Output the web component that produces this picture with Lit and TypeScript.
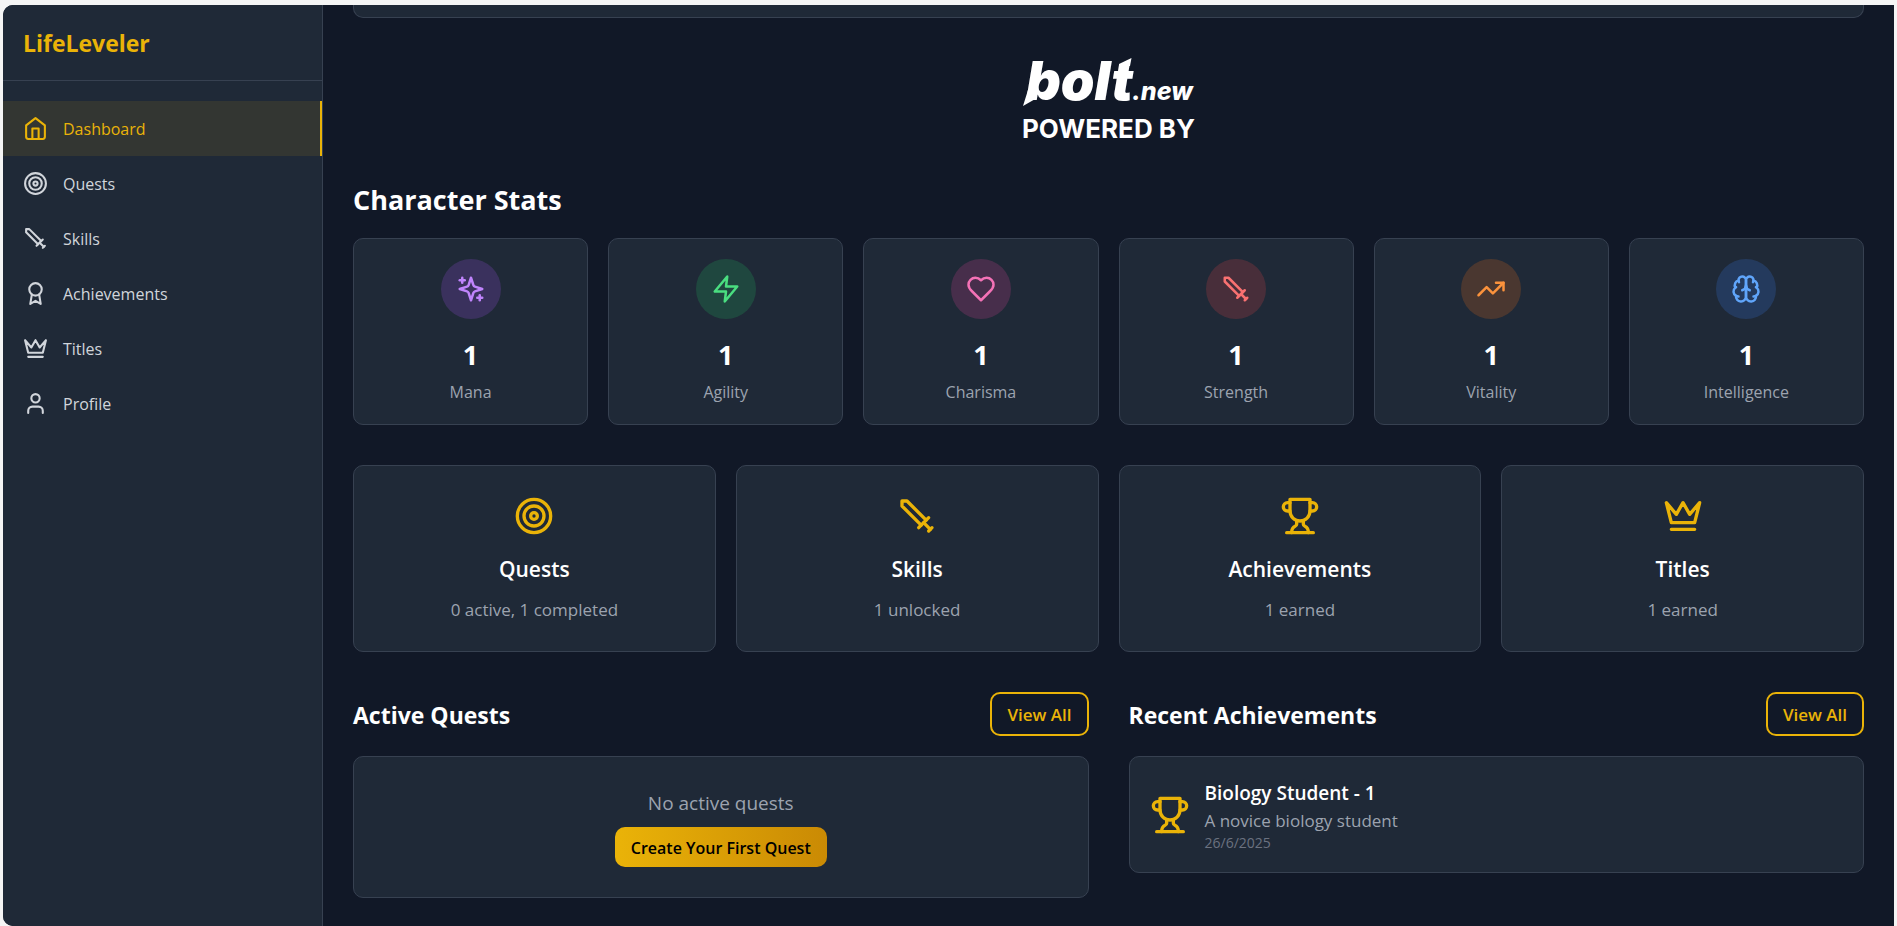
import { LitElement, html, svg, css } from 'lit';
import { customElement, property } from 'lit/decorators.js';
import { classMap } from 'lit/directives/class-map.js';

const ICONS: Record<string, unknown> = {
  home: svg`<path d="m3 9 9-7 9 7v11a2 2 0 0 1-2 2H5a2 2 0 0 1-2-2z"/><polyline points="9 22 9 12 15 12 15 22"/>`,
  target: svg`<circle cx="12" cy="12" r="10"/><circle cx="12" cy="12" r="6"/><circle cx="12" cy="12" r="2"/>`,
  sword: svg`<polyline points="14.5 17.5 3 6 3 3 6 3 17.5 14.5"/><line x1="13" x2="19" y1="19" y2="13"/><line x1="16" x2="20" y1="16" y2="20"/><line x1="19" x2="21" y1="21" y2="19"/>`,
  award: svg`<circle cx="12" cy="8" r="6"/><path d="M15.477 12.89 17 22l-5-3-5 3 1.523-9.11"/>`,
  crown: svg`<path d="m2 4 3 12h14l3-12-6 7-4-7-4 7-6-7zm3 16h14"/>`,
  user: svg`<path d="M19 21v-2a4 4 0 0 0-4-4H9a4 4 0 0 0-4 4v2"/><circle cx="12" cy="7" r="4"/>`,
  sparkles: svg`<path d="m12 3-1.912 5.813a2 2 0 0 1-1.275 1.275L3 12l5.813 1.912a2 2 0 0 1 1.275 1.275L12 21l1.912-5.813a2 2 0 0 1 1.275-1.275L21 12l-5.813-1.912a2 2 0 0 1-1.275-1.275L12 3Z"/><path d="M5 3v4"/><path d="M19 17v4"/><path d="M3 5h4"/><path d="M17 19h4"/>`,
  zap: svg`<polygon points="13 2 3 14 12 14 11 22 21 10 12 10 13 2"/>`,
  heart: svg`<path d="M19 14c1.49-1.46 3-3.21 3-5.5A5.5 5.5 0 0 0 16.5 3c-1.76 0-3 .5-4.5 2-1.5-1.5-2.74-2-4.5-2A5.5 5.5 0 0 0 2 8.5c0 2.3 1.5 4.05 3 5.5l7 7Z"/>`,
  trend: svg`<polyline points="22 7 13.5 15.5 8.5 10.5 2 17"/><polyline points="16 7 22 7 22 13"/>`,
  brain: svg`<path d="M12 5a3 3 0 1 0-5.997.125 4 4 0 0 0-2.526 5.77 4 4 0 0 0 .556 6.588A4 4 0 1 0 12 18Z"/><path d="M12 5a3 3 0 1 1 5.997.125 4 4 0 0 1 2.526 5.77 4 4 0 0 1-.556 6.588A4 4 0 1 1 12 18Z"/><path d="M15 13a4.5 4.5 0 0 1-3-4 4.5 4.5 0 0 1-3 4"/><path d="M17.599 6.5a3 3 0 0 0 .399-1.375"/><path d="M6.003 5.125A3 3 0 0 0 6.401 6.5"/><path d="M3.477 10.896a4 4 0 0 1 .585-.396"/><path d="M19.938 10.5a4 4 0 0 1 .585.396"/><path d="M6 18a4 4 0 0 1-1.967-.516"/><path d="M19.967 17.484A4 4 0 0 1 18 18"/>`,
  trophy: svg`<path d="M6 9H4.5a2.5 2.5 0 0 1 0-5H6"/><path d="M18 9h1.5a2.5 2.5 0 0 0 0-5H18"/><path d="M4 22h16"/><path d="M10 14.66V17c0 .55-.47.98-.97 1.21C7.85 18.75 7 20.24 7 22"/><path d="M14 14.66V17c0 .55.47.98.97 1.21C16.15 18.75 17 20.24 17 22"/><path d="M18 2H6v7a6 6 0 0 0 12 0V2Z"/>`,
};

@customElement('line-icon')
export class LineIcon extends LitElement {
  @property() name = '';

  static styles = css`
    :host { display: block; flex: none; width: 25px; height: 25px; }
    svg {
      display: block; width: 100%; height: 100%;
      fill: none; stroke: currentColor; stroke-width: 2;
      stroke-linecap: round; stroke-linejoin: round;
    }
  `;

  render() {
    return html`<svg viewBox="0 0 24 24" aria-hidden="true">${ICONS[this.name]}</svg>`;
  }
}

@customElement('side-nav')
export class SideNav extends LitElement {
  private items = [
    { icon: 'home', label: 'Dashboard', active: true },
    { icon: 'target', label: 'Quests' },
    { icon: 'sword', label: 'Skills' },
    { icon: 'award', label: 'Achievements' },
    { icon: 'crown', label: 'Titles' },
    { icon: 'user', label: 'Profile' },
  ];

  static styles = css`
    :host {
      display: block; flex: none; width: 320px; box-sizing: border-box;
      background: #1f2937; border-right: 1px solid #374151;
    }
    .brand {
      padding: 21px 20px 19px; border-bottom: 1px solid #374151;
      color: #eab308; font-size: 23px; line-height: 35px; font-weight: 700;
    }
    nav { padding-top: 20px; }
    .item {
      display: flex; align-items: center; gap: 15px; padding: 14px 20px;
      color: #d1d5db; font-size: 16px; line-height: 25px; text-decoration: none;
    }
    .text { padding-top: 2px; }
    .active {
      color: #eab308; background: rgba(234, 179, 8, 0.1);
      border-right: 2px solid #eab308;
    }
  `;

  render() {
    return html`
      <div class="brand">LifeLeveler</div>
      <nav>
        ${this.items.map(i => html`
          <a href="#" class=${classMap({ item: true, active: !!i.active })}>
            <line-icon name=${i.icon}></line-icon><span class="text">${i.label}</span>
          </a>`)}
      </nav>
    `;
  }
}

@customElement('app-root')
export class AppRoot extends LitElement {
  private stats = [
    { key: 'mana', icon: 'sparkles', label: 'Mana', value: 1 },
    { key: 'agility', icon: 'zap', label: 'Agility', value: 1 },
    { key: 'charisma', icon: 'heart', label: 'Charisma', value: 1 },
    { key: 'strength', icon: 'sword', label: 'Strength', value: 1 },
    { key: 'vitality', icon: 'trend', label: 'Vitality', value: 1 },
    { key: 'intelligence', icon: 'brain', label: 'Intelligence', value: 1 },
  ];

  private links = [
    { icon: 'target', title: 'Quests', detail: '0 active, 1 completed' },
    { icon: 'sword', title: 'Skills', detail: '1 unlocked' },
    { icon: 'trophy', title: 'Achievements', detail: '1 earned' },
    { icon: 'crown', title: 'Titles', detail: '1 earned' },
  ];

  static styles = css`
    :host {
      display: block; box-sizing: border-box; min-height: 100vh;
      padding: 5px 3px 0; background: #f5f5f5;
      font-family: "Open Sans", "Noto Sans", sans-serif; color: #fff;
    }
    .frame {
      display: flex; min-height: calc(100vh - 5px); overflow: hidden;
      border-radius: 10px 0 0 10px; background: #111827;
    }
    main {
      flex: 1; min-width: 0; padding: 0 30px 20px;
      display: flex; flex-direction: column; gap: 40px;
    }
    h2, h3, p { margin: 0; }
    .card {
      background: #1f2937; border: 1px solid #374151; border-radius: 10px;
      box-sizing: border-box;
    }
    .hero { height: 13px; border-top: 0; border-radius: 0 0 10px 10px; }
    .powered { align-self: center; display: block; }
    .logo { display: block; width: 172px; height: 80px; overflow: visible; fill: #fff; font-family: Inter, sans-serif; }
    .word { font-size: 54px; font-weight: 900; font-style: italic; }
    .suffix { font-size: 25px; font-weight: 800; font-style: italic; }
    .by { font-size: 26px; font-weight: 700; }

    .title { padding-top: 2px; font-size: 27px; line-height: 40px; font-weight: 700; margin-bottom: 18px; }
    .stats { display: grid; grid-template-columns: repeat(6, 1fr); gap: 20px; }
    .stat { padding: 20px 20px 19px; text-align: center; }
    .badge {
      width: 60px; height: 60px; margin: 0 auto 16px; border-radius: 50%;
      display: grid; place-items: center;
    }
    .badge line-icon { width: 30px; height: 30px; }
    .mana { color: #c084fc; background: rgba(168, 85, 247, 0.2); }
    .agility { color: #4ade80; background: rgba(34, 197, 94, 0.2); }
    .charisma { color: #f472b6; background: rgba(236, 72, 153, 0.2); }
    .strength { color: #f87171; background: rgba(239, 68, 68, 0.2); }
    .vitality { color: #fb923c; background: rgba(249, 115, 22, 0.2); }
    .intelligence { color: #60a5fa; background: rgba(59, 130, 246, 0.2); }
    .value { font-size: 27px; line-height: 40px; font-weight: 700; margin-bottom: 5px; }
    .label { font-size: 16px; line-height: 25px; color: #9ca3af; }

    .links { display: grid; grid-template-columns: repeat(4, 1fr); gap: 20px; }
    .link {
      padding: 30px 30px 29px; display: flex; flex-direction: column; align-items: center;
      color: #fff; text-decoration: none; text-align: center;
    }
    .large { width: 40px; height: 40px; color: #eab308; }
    .link h3 { margin: 16px 0 10px; font-size: 21px; line-height: 35px; font-weight: 600; }
    .detail { font-size: 17px; line-height: 25px; color: #9ca3af; }

    .columns { display: grid; grid-template-columns: 1fr 1fr; gap: 40px; align-items: start; }
    .head { display: flex; align-items: center; justify-content: space-between; margin-bottom: 20px; }
    .head h2 { padding-top: 2px; font-size: 23px; line-height: 35px; font-weight: 700; }
    button { font-family: inherit; font-weight: 600; border-radius: 10px; cursor: pointer; }
    .outline {
      height: 44px; padding: 1px 15px 0; border: 2px solid #eab308;
      background: transparent; color: #eab308; font-size: 17px; line-height: 25px;
    }
    .empty { padding: 31px 30px 30px; display: flex; flex-direction: column; align-items: center; gap: 9px; }
    .empty p { font-size: 19px; line-height: 30px; color: #9ca3af; }
    .primary {
      height: 40px; padding: 2px 16px 0; border: 0; color: #000;
      background: linear-gradient(to right, #eab308, #ca8a04);
      font-size: 16px; line-height: 25px;
    }
    .award { padding: 20px; display: flex; align-items: center; gap: 15px; }
    .award h3 { padding-top: 1px; font-size: 19px; line-height: 30px; font-weight: 600; }
    .date { font-size: 14px; line-height: 19px; color: #6b7280; }
  `;

  render() {
    return html`
      <div class="frame">
        <side-nav></side-nav>
        <main>
          <div class="card hero"></div>

          <a class="powered" href="#" aria-label="Powered by bolt.new">
            <svg class="logo" viewBox="0 0 172 80">
              <polygon points="5,32 0,48 14,40"/>
              <polygon points="96,6 108.500,0 107,8 96,8"/>
              <text class="word" x="3" y="42">bolt</text>
              <text class="suffix" x="109" y="42">.new</text>
              <text class="by" x="-1" y="80">POWERED BY</text>
            </svg>
          </a>

          <section>
            <h2 class="title">Character Stats</h2>
            <div class="stats">
              ${this.stats.map(s => html`
                <div class="card stat">
                  <div class="badge ${s.key}"><line-icon name=${s.icon}></line-icon></div>
                  <div class="value">${s.value}</div>
                  <div class="label">${s.label}</div>
                </div>`)}
            </div>
          </section>

          <section class="links">
            ${this.links.map(l => html`
              <a class="card link" href="#">
                <line-icon class="large" name=${l.icon}></line-icon>
                <h3>${l.title}</h3>
                <p class="detail">${l.detail}</p>
              </a>`)}
          </section>

          <div class="columns">
            <section>
              <div class="head"><h2>Active Quests</h2><button class="outline">View All</button></div>
              <div class="card empty">
                <p>No active quests</p>
                <button class="primary">Create Your First Quest</button>
              </div>
            </section>
            <section>
              <div class="head"><h2>Recent Achievements</h2><button class="outline">View All</button></div>
              <div class="card award">
                <line-icon class="large" name="trophy"></line-icon>
                <div>
                  <h3>Biology Student - 1</h3>
                  <p class="detail">A novice biology student</p>
                  <p class="date">26/6/2025</p>
                </div>
              </div>
            </section>
          </div>
        </main>
      </div>
    `;
  }
}
